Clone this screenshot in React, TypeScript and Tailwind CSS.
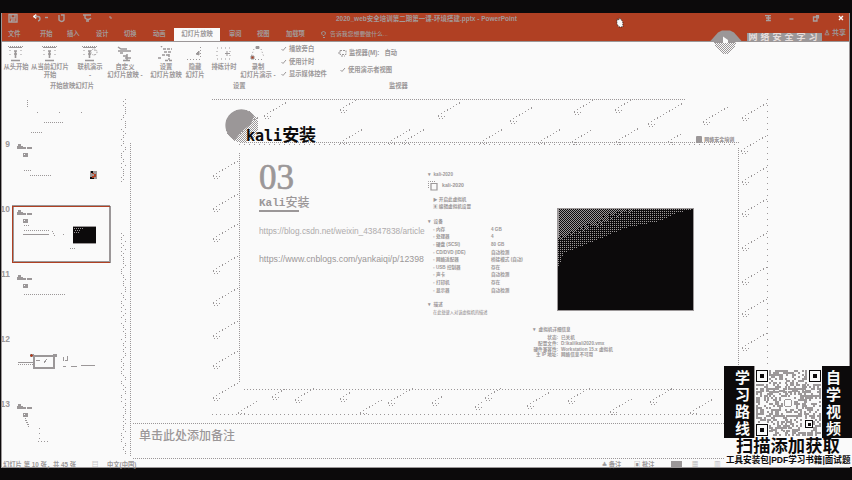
import React from "react";

const GRAY = "#9b9798";
const RED = "#b04023";
const INK = "#0c0a0b";

// A run of points spaced along a segment, drawn as single pixels.
function Dots({ x1, y1, x2, y2, gap = 2 }: { x1: number; y1: number; x2: number; y2: number; gap?: number }) {
  return (
    <line x1={x1} y1={y1} x2={x2} y2={y2} stroke={GRAY} strokeWidth="1" strokeDasharray={`1 ${gap - 1}`} />
  );
}

function noise(n: number) {
  const v = Math.sin(n * 127.1 + 11.7) * 43758.5453;
  return v - Math.floor(v);
}

function QuickIcons() {
  return (
    <svg width="110" height="14" viewBox="0 0 110 14" fill="none" stroke="#a9a0a0" strokeWidth="1.4">
      <path d="M7 1.500h8v7.500h-8z M9 2v3h4v-3 M9.500 9v-2h4" />
      <path d="M31 3.500l3-2v4z" fill="#fafafa" stroke="#fafafa" strokeWidth=".8" />
      <path d="M33 3.500h3q2 0 2 2.500q0 1.500-2 2" />
      <path d="M43 4.500h3" />
      <path d="M57 2v5q3 3 5 0v-5 M59 2h3v3" />
      <path d="M81 2h8 M83 2v3q3 3 6 0 M84 8h3" />
      <path d="M108 3v2h2" strokeWidth="1" />
    </svg>
  );
}

function TitleBar() {
  return (
    <div className="flex h-[15px] shrink-0 items-start">
      <div className="w-[334px] shrink-0"><QuickIcons /></div>
      <div className="h-[11px] w-[183px] shrink-0 whitespace-nowrap text-[6.500px] font-bold leading-[11px] text-[#a39a9a]">
        2020_web安全培训第二期第一课-环境搭建.pptx - PowerPoint
      </div>
      <svg className="ml-[95px]" width="14" height="18" viewBox="0 0 14 18">
        <path d="M3 6l2 1V5l2 1 2 3v5H5L3 11z" fill="#fafafa" stroke={INK} strokeWidth=".8" strokeDasharray="1 1" />
      </svg>
      <svg className="ml-[137px]" width="86" height="12" viewBox="0 0 86 12" fill="none" stroke="#a9a0a0" strokeWidth="1.4">
        <path d="M0 2.500h6 M3.500 3v5 M1 5h5 M1 7.500h5" />
        <path d="M25 6h4" />
        <path d="M52 2.500h2.500v3 M49.500 4h3.500v4h-3.500z" />
        <path d="M75.500 3l4 4 M79.500 3l-4 4" stroke="#fafafa" />
      </svg>
    </div>
  );
}

const tabs: [string, string][] = [
  ["文件", "w-[32px]"],
  ["开始", "w-[27px]"],
  ["插入", "w-[29px]"],
  ["设计", "w-[28px]"],
  ["切换", "w-[29px]"],
  ["动画", "w-[21px]"],
];

function TabBar() {
  return (
    <div className="flex h-[13px] shrink-0 items-stretch pl-[6px] text-[6.300px] font-bold leading-[12px] text-[#a39a9a]">
      {tabs.map(([t, w]) => (
        <div key={t} className={`${w} shrink-0`}>{t}</div>
      ))}
      <div className="h-[14px] w-[46px] shrink-0 bg-[#fafafa] text-center text-[#9b9798]">幻灯片放映</div>
      <div className="ml-[9px] w-[28px] shrink-0">审阅</div>
      <div className="w-[29px] shrink-0">视图</div>
      <div className="w-[35px] shrink-0">加载项</div>
      <svg className="mt-[3px] shrink-0" width="9" height="8" viewBox="0 0 9 8" fill="none" stroke={GRAY}>
        <path d="M.5 1.500q2-2 4 0q0 2-1.500 3h-1q-1.500-1-1.500-3z M2 6.500h2" />
      </svg>
      <div className="whitespace-nowrap text-[5.900px] font-medium">告诉我您想要做什么...</div>
    </div>
  );
}

function RibbonIcon({ kind }: { kind: number }) {
  const board = (
    <>
      <path d="M0 .5h15" strokeDasharray="1 1" />
      <path d="M1 1.500h13" />
      <path d="M6 5h3 M7.500 5v7 M6 8h3" strokeWidth="1.600" />
      <path d="M3 14.500h9" strokeWidth="1.500" />
      <path d="M2 4v8 M13 4v8" strokeDasharray="1 3" />
    </>
  );
  const shapes = [
    board,
    board,
    <>
      {board}
      <circle cx="12" cy="6" r="3" strokeDasharray="1 1" />
    </>,
    <path d="M1 1l3 2h6 M1 5h13 M3 7h3 M6 10h4 M8 12h6 M10 8v6 M6 14.500h7" strokeWidth="1.500" />,
    <path d="M3 0l1 1 M5 3h9 M6 6h8 M4 9h7 M11 8v6 M7 14.500h7 M0 12h3" strokeDasharray="3 1" strokeWidth="1.500" />,
    <>
      <path d="M0 13.500h15 M13.500 1v10" strokeDasharray="1 2" />
      <path d="M9 8l3-3v4z" fill={GRAY} />
    </>,
    <>
      <path d="M1 2h13v11H1z" strokeDasharray="1 3" />
      <path d="M11 5v5 M9 7.500h5" />
    </>,
    <>
      <path d="M4 3l-3 8 M11 3l3 8 M5 13.500h8" strokeDasharray="1 2" />
      <path d="M6 .5h3v2h-3z" fill={GRAY} />
      <path d="M1 10h3v3h-3z" fill={RED} />
    </>,
  ];
  return (
    <svg width="16" height="16" viewBox="0 0 16 16" fill="none" stroke={GRAY} className="shrink-0">
      {shapes[kind]}
    </svg>
  );
}

const commands: [string, string, string][] = [
  ["从头开始", "", "w-[26px]"],
  ["从当前幻灯片", "开始", "w-[42px]"],
  ["联机演示", "-", "w-[38px]"],
  ["自定义", "幻灯片放映 -", "w-[32px]"],
  ["设置", "幻灯片放映", "w-[50px]"],
  ["隐藏", "幻灯片", "w-[8px]"],
  ["排练计时", "", "w-[50px]"],
  ["录制", "幻灯片演示 -", "w-[18px]"],
];

function Check() {
  return (
    <svg width="6" height="6" viewBox="0 0 6 6" fill="none" stroke={GRAY} className="shrink-0">
      <path d="M.5 3l1.500 1.500L5 1" />
    </svg>
  );
}

function Ribbon() {
  return (
    <div className="flex h-[58px] shrink-0 border-t border-[#9b9798] bg-[#fafafa] text-[6.300px] font-bold leading-[8px] text-[#9b9798]">
      <div className="flex w-[276px] shrink-0 flex-col">
        <div className="flex h-[40px] pl-[1px] pt-[4px]">
          {commands.map(([a, b, w], i) => (
            <div key={i} className={`${w} flex shrink-0 flex-col items-center whitespace-nowrap`}>
              <RibbonIcon kind={i} />
              <div className="mt-[1px] flex flex-col items-center">
                <span>{a}</span>
                <span>{b}</span>
              </div>
            </div>
          ))}
        </div>
        <div className="flex">
          <div className="ml-[48px] w-[183px]">开始放映幻灯片</div>
          <div>设置</div>
        </div>
      </div>
      <div className="flex w-[60px] shrink-0 flex-col gap-[4.500px] whitespace-nowrap pt-[3px]">
        {["播放旁白", "使用计时", "显示媒体控件"].map((t) => (
          <div key={t} className="flex items-center gap-[2px] pl-[3px]"><Check />{t}</div>
        ))}
      </div>
      <div className="flex shrink-0 flex-col pt-[7px]">
        <div className="flex items-center gap-[2px]">
          <svg width="9" height="8" viewBox="0 0 9 8" fill="none" stroke={GRAY}>
            <path d="M2 1.500h6v4h-6z M0 4h3 M3 7h4" strokeDasharray="2 1" />
          </svg>
          <span>监视器(M):</span><span className="ml-[3px]">自动</span>
        </div>
        <div className="mt-[9px] flex items-center gap-[2px] pl-[2px]"><Check />使用演示者视图</div>
        <div className="ml-[51px] mt-[8px]">监视器</div>
      </div>
    </div>
  );
}

// Small avatar plus caption that opens each thumbnail.
function ThumbHead({ x, y }: { x: number; y: number }) {
  return (
    <g fill={GRAY} stroke="none">
      <path d={`M${x} ${y + 2}h1v-2h3v2h2v3h-6z`} />
      <rect x={x + 5} y={y + 3} width="4" height="2" />
      <rect x={x + 10} y={y + 3} width="5" height="2" />
      <rect x={x + 6} y={y + 9} width="5" height="4" />
      <rect x={x + 7} y={y + 10} width="1" height="1" fill="#fafafa" />
    </g>
  );
}

function ThumbPane() {
  const speckles: [number, number][] = [];
  for (let y = 0; y < 356; y += 2) {
    if (y > 82 && y < 134) continue;
    speckles.push([121 + 2 * Math.floor(noise(y) * 3), y]);
  }
  return (
    <div className="flex w-[130px] shrink-0">
      <div className="flex w-[9px] shrink-0 flex-col pt-[39px] text-[8.500px] font-bold leading-[12px] text-[#9b9798]">
        {[9, 10, 11, 12, 13].map((n) => (
          <div key={n} className="flex h-[65px] w-[8px] shrink-0 justify-end overflow-hidden">{n}</div>
        ))}
      </div>
      <svg width="121" height="360" viewBox="11 0 121 360" shapeRendering="crispEdges" fill="none" stroke={GRAY} className="shrink-0">
        <Dots x1={27.500} y1={-1} x2={27.500} y2={8} />
        <Dots x1={37} y1={13.500} x2={90} y2={13.500} gap={22} />
        <Dots x1={44} y1={23.500} x2={64} y2={23.500} />
        <Dots x1={31} y1={33.500} x2={43} y2={33.500} />
        <ThumbHead x={17} y={45} />
        <Dots x1={24} y1={71.500} x2={32} y2={71.500} />
        <Dots x1={30} y1={76.500} x2={52} y2={76.500} />
        <path d="M90 72h7v8h-7z" fill={GRAY} stroke="none" />
        <path d="M91 72h2v2h-2z M90 78h4v2h-4z" fill={INK} stroke="none" />
        <path d="M92 74h2v1h-2z M94 75h2v3h-2z M92 77h2v2h-2z" fill={RED} stroke="none" />
        <rect x="12" y="106" width="98" height="1" fill={GRAY} stroke="none" />
        <rect x="13" y="107" width="1" height="57" fill={GRAY} stroke="none" />
        <rect x="12" y="162" width="98" height="1" fill={GRAY} stroke="none" />
        <rect x="109" y="107" width="2" height="57" fill={GRAY} stroke="none" />
        <rect x="12" y="107" width="98" height="1" fill={RED} stroke="none" />
        <rect x="12" y="107" width="1" height="57" fill={RED} stroke="none" />
        <rect x="12" y="163" width="98" height="1" fill={RED} stroke="none" />
        <ThumbHead x={17} y={111} />
        <Dots x1={24} y1={126.500} x2={30} y2={126.500} />
        <Dots x1={24} y1={131.500} x2={50} y2={131.500} />
        <path d="M23 135.500h26" />
        <path d="M52 132.500h1 M53 134.500h1 M54 136.500h1 M63 135.500h1" />
        <rect x="73" y="127" width="23" height="17" fill={INK} stroke="none" />
        <path d="M73 127.500h23 M73 144.500h23" />
        <Dots x1={74} y1={129.500} x2={84} y2={129.500} />
        <Dots x1={75} y1={131.500} x2={81} y2={131.500} />
        <Dots x1={74} y1={133.500} x2={79} y2={133.500} />
        <Dots x1={70} y1={149.500} x2={76} y2={149.500} />
        <ThumbHead x={17} y={176} />
        <Dots x1={24} y1={195.500} x2={65} y2={195.500} />
        <rect x="34" y="257" width="20" height="12" strokeWidth="2" />
        <rect x="30" y="255" width="4" height="3" fill={GRAY} stroke="none" />
        <rect x="53" y="255" width="4" height="3" fill={GRAY} stroke="none" />
        <path d="M30 256.500h3 M31.500 255v3" stroke={RED} />
        <path d="M36 261.500h4 M44 264l3-4 M18 263.500h16" />
        <Dots x1={18} y1={265.500} x2={34} y2={265.500} />
        <path d="M63.500 258v4 M65 261h2 M67.500 257v5 M63 267.500h3 M71 267.500h6 M81 266.500h14" />
        <ThumbHead x={17} y={305} />
        <Dots x1={25} y1={319.500} x2={29} y2={327.500} />
        <Dots x1={39.500} y1={328.500} x2={39.500} y2={340} gap={5} />
        <Dots x1={38} y1={342.500} x2={48} y2={342.500} gap={3} />
        {speckles.map(([x, y], i) => (
          <rect key={i} x={x} y={y} width="1" height="1" fill={GRAY} stroke="none" />
        ))}
        <Dots x1={130.500} y1={44} x2={130.500} y2={358} />
      </svg>
    </div>
  );
}

const devices: [string, string][] = [
  ["内存", "4 GB"],
  ["处理器", "4"],
  ["硬盘 (SCSI)", "80 GB"],
  ["CD/DVD (IDE)", "自动检测"],
  ["网络适配器", "桥接模式 (自动)"],
  ["USB 控制器", "存在"],
  ["声卡", "自动检测"],
  ["打印机", "存在"],
  ["显示器", "自动检测"],
];

function VmColumn() {
  return (
    <div className="flex w-[105px] shrink-0 flex-col whitespace-nowrap pl-[1px] pt-[27px] text-[4.600px] font-bold leading-[7.600px] text-[#9b9798]">
      <div>▾&nbsp; kali-2020</div>
      <div className="mt-[2px] flex items-center gap-[4px]">
        <svg width="10" height="10" viewBox="0 0 10 10" fill="none" stroke={GRAY}>
          <path d="M3 2.500h6v6.500H3z" strokeWidth="1.200" />
          <path d="M.5 7V.5h7" strokeDasharray="1 1" />
        </svg>
        <span className="text-[5.200px]">kali-2020</span>
      </div>
      <div className="mt-[5px] pl-[5px]">▶ 开启此虚拟机</div>
      <div className="pl-[5px]">▣ 编辑虚拟机设置</div>
      <div className="mt-[7.500px]">▾&nbsp; 设备</div>
      {devices.map(([a, b]) => (
        <div key={a} className="flex pl-[5px]">
          <span className="w-[58px] shrink-0">▫ {a}</span>
          <span>{b}</span>
        </div>
      ))}
      <div className="mt-[7px]">▾&nbsp; 描述</div>
      <div className="pl-[5px] text-[4.200px] font-medium">在此处键入对该虚拟机的描述</div>
    </div>
  );
}

const details: [string, string][] = [
  ["状态:", "已关机"],
  ["配置文件:", "D:\\kali\\kali2020.vmx"],
  ["硬件兼容性:", "Workstation 15.x 虚拟机"],
  ["主 IP 地址:", "网络信息不可用"],
];

// Right-hand limit of the highlight in the screen's corner, as [row, column] knots.
const knots: [number, number][] = [[0, 136], [2, 132], [4, 121], [13, 101], [20, 66], [33, 36], [45, 6], [57, 2], [58, 0]];

function reachAt(y: number) {
  for (let i = 1; i < knots.length; i++) {
    const [y0, x0] = knots[i - 1];
    const [y1, x1] = knots[i];
    if (y <= y1) return x0 + ((x1 - x0) * (y - y0)) / (y1 - y0);
  }
  return 0;
}

function Screen() {
  const cells: React.ReactElement[] = [];
  for (let y = 1; y < 58; y++) {
    const reach = reachAt(y);
    for (let x = 2 - (y % 2); x < reach; x += 2) {
      // Even rows thin out with distance from the top-left corner.
      if (y % 2 === 0 && x / 75 + y / 30 > 0.85 + noise(y * 91 + x) * 0.3) continue;
      cells.push(<rect key={`${y}-${x}`} x={x} y={y} width="1" height="1" />);
    }
  }
  return (
    <svg width="137" height="104" viewBox="0 0 137 104" shapeRendering="crispEdges" fill={GRAY}>
      <rect x=".5" y=".5" width="136" height="102" rx="1" fill={INK} stroke={GRAY} />
      <rect x="0" y="0" width="2" height="30" />
      {cells}
    </svg>
  );
}

// Dotted brick texture surrounding the slide's white card.
function SlideTexture() {
  const strokes: [number, number, number][] = [
    [236, 130, 1], [264, 115, 1], [340, 142, 1], [388, 142, 1], [340, 109, .7], [402, 142, 1], [438, 115, 1],
    [480, 142, 1], [510, 120, 1], [538, 142, 1], [572, 141, .8], [574, 111, .8], [616, 141, 1], [615, 109, .8],
    [648, 123, 1.500], [668, 141, .6], [703, 121, 1.100], [742, 117, 1.100], [741, 150, 1.100], [742, 181, 1.100], [742, 213, 1.100],
    [742, 247, 1.100], [742, 281, 1.100], [742, 313, 1.100], [742, 347, 1.100], [742, 380, 1],
    [213, 175, 1.100], [213, 208, 1.100], [213, 238, 1.100], [213, 270, 1.100], [213, 302, 1.100], [213, 335, 1.100],
    [213, 365, 1.100], [213, 397, 1.100], [238, 412, .8], [272, 396, 1], [295, 399, 1], [340, 398, .5],
    [360, 412, .9], [388, 402, 1.200], [432, 402, .5], [475, 406, .3], [485, 397, 1], [527, 405, 1], [568, 400, 1],
    [610, 411, .9], [650, 401, 1], [690, 412, 1],
  ];
  return (
    <svg className="absolute inset-0" width="557" height="316" viewBox="211 99 557 316" shapeRendering="crispEdges" fill="none">
      <Dots x1={212} y1={99.500} x2={686} y2={99.500} />
      <Dots x1={212} y1={414.500} x2={768} y2={414.500} gap={4} />
      <Dots x1={767.500} y1={99} x2={767.500} y2={414} gap={6} />
      {strokes.map(([x, y, s], i) => (
        <Dots key={i} x1={x} y1={y + .5} x2={x + 24 * s} y2={y + .5 - 14 * s} gap={3.500} />
      ))}
      {strokes.map(([x, y], i) => (
        <g key={i}>
          <Dots x1={x} y1={y + 1.500} x2={x + 7} y2={y + 1.500} gap={3} />
          <Dots x1={x + 1} y1={y + 3.500} x2={x + 5} y2={y + 3.500} gap={3} />
        </g>
      ))}
      <rect x="241" y="145" width="497" height="243" fill="#fafafa" />
      <Dots x1={240} y1={142.500} x2={739} y2={142.500} />
      <Dots x1={239} y1={144.500} x2={739} y2={144.500} gap={5} />
      <Dots x1={239.500} y1={153} x2={239.500} y2={383} />
      <Dots x1={738.500} y1={148} x2={738.500} y2={388} />
      <Dots x1={244} y1={389.500} x2={739} y2={389.500} gap={3} />
    </svg>
  );
}

function Slide() {
  return (
    <div className="relative ml-[79px] flex h-[316px] w-[557px] shrink-0 flex-col">
      <SlideTexture />
      <div className="relative flex h-[45px] shrink-0 items-start pl-[14px]">
        <svg width="34" height="36" viewBox="0 0 34 36" className="mt-[10px] shrink-0">
          <defs>
            <pattern id="grain" width="2" height="2" patternUnits="userSpaceOnUse">
              <path d="M0 0h1v1H0z M1 1h1v1H1z" fill={GRAY} />
            </pattern>
          </defs>
          <circle cx="17" cy="17" r="16.500" fill="url(#grain)" shapeRendering="crispEdges" />
          <path d="M10 31A16 16 0 1 1 29 6.500L26 15 16 23z" fill={GRAY} />
        </svg>
        <div className="-ml-[13px] mt-[27px] flex items-center whitespace-nowrap leading-[20px] text-[#0c0a0b]">
          <span className="font-['DejaVu_Sans_Mono',monospace] text-[15px] font-bold">kali</span>
          <span className="text-[17px] font-bold">安装</span>
        </div>
        <div className="ml-[380px] mt-[37px] flex shrink-0 items-center gap-[2px]">
          <div className="h-[7px] w-[6px] rounded-[1px] bg-[#9b9798]" />
          <span className="whitespace-nowrap text-[5px] font-black leading-[7px] text-[#9b9798]">网络安全培训</span>
        </div>
      </div>
      <div className="relative flex min-h-0 flex-1 pl-[48px]">
        <div className="flex w-[168px] shrink-0 flex-col whitespace-nowrap text-[#9b9798]">
          <div className="mt-[14px] h-[39px] font-['Liberation_Serif',serif] text-[35px] leading-[40px] [-webkit-text-stroke:0.700px_#9b9798]">03</div>
          <div className="flex h-[13px] items-center leading-[13px]">
            <span className="font-['Liberation_Mono',monospace] text-[11px] font-bold">Kali</span>
            <span className="text-[12px] font-medium">安装</span>
          </div>
          <div className="h-[2px] w-[40px] bg-[#9b9798]" />
          <div className="mt-[13px] h-[12px] text-[8.300px] leading-[12px] opacity-80">https://blog.csdn.net/weixin_43847838/article</div>
          <div className="mt-[16px] h-[12px] text-[8.750px] leading-[12px]">https://www.cnblogs.com/yankaiqi/p/12398</div>
        </div>
        <VmColumn />
        <div className="flex flex-col pl-[25px]">
          <div className="pt-[64px]"><Screen /></div>
          <div className="-ml-[24px] mt-[15px] flex flex-col whitespace-nowrap text-[4.600px] font-bold leading-[5.800px] text-[#9b9798]">
            <div className="mb-[1.500px] leading-[6.500px]">▾&nbsp; 虚拟机详细信息</div>
            {details.map(([a, b]) => (
              <div key={a} className="flex gap-[3px]">
                <span className="w-[25px] text-right">{a}</span>
                <span>{b}</span>
              </div>
            ))}
          </div>
        </div>
      </div>
    </div>
  );
}

function DottedRule() {
  return (
    <svg width="718" height="1" viewBox="0 0 718 1" shapeRendering="crispEdges" className="block shrink-0">
      <Dots x1={1} y1={.5} x2={718} y2={.5} />
    </svg>
  );
}

function StatusBar() {
  return (
    <div className="flex h-[9px] shrink-0 items-center whitespace-nowrap border-b border-[#9b9798] pl-[1px] pt-[2px] text-[6.300px] font-bold leading-[7px] text-[#9b9798]">
      <span className="w-[89px]">幻灯片 第 10 张，共 45 张</span>
      <span className="w-[15px]">▤</span>
      <span className="w-[495px]">中文(中国)</span>
      <span className="w-[32px]">≜ 备注</span>
      <span className="w-[37px]">▣ 批注</span>
      <span className="h-[6px] w-[11px] bg-[#9b9798]" />
      <span className="ml-[10px]">▦</span>
      <span className="ml-[16px]">▥</span>
    </div>
  );
}

function QrCode() {
  const cells: React.ReactElement[] = [];
  for (let r = 0; r < 34; r++) {
    for (let c = 0; c < 34; c++) {
      const corner = (r < 7 && (c < 7 || c > 26)) || (r > 26 && c < 7);
      const align = r > 24 && r < 31 && c > 23 && c < 30;
      const center = r > 13 && r < 20 && c > 13 && c < 20;
      if (corner || align || center) continue;
      if (noise(r * 57 + c * 3.300) > 0.5) {
        cells.push(<rect key={`${r}-${c}`} x={c * 1.900} y={r * 1.950} width="2" height="2" />);
      }
    }
  }
  const finder = (x: number, y: number, s: number) => (
    <g>
      <rect x={x + .5} y={y + .5} width={s - 1} height={s - 1} fill="#fafafa" stroke={INK} />
      <rect x={Math.round(x + s / 3)} y={Math.round(y + s / 3)} width={Math.round(s / 3)} height={Math.round(s / 3)} fill={INK} />
    </g>
  );
  return (
    <svg width="66" height="68" viewBox="0 0 66 68" fill={GRAY} shapeRendering="crispEdges">
      {cells}
      {finder(0, 0, 12)}
      {finder(53, 0, 12)}
      {finder(0, 54, 12)}
      {finder(49, 50, 8)}
      <circle cx="32" cy="33" r="4" fill="none" stroke={GRAY} />
    </svg>
  );
}

function Promo() {
  return (
    <div className="absolute left-[724px] top-[366px] flex h-[101px] w-[128px] flex-col bg-[#fafafa]">
      <div className="flex h-[72px] shrink-0 bg-[#0c0a0b] text-[15px] font-bold leading-[16.900px] text-[#fafafa]">
        <div className="flex w-[30px] shrink-0 flex-col items-center pl-[7px] pt-[4px]">
          {"学习路线".split("").map((c) => <span key={c}>{c}</span>)}
        </div>
        <div className="w-[68px] shrink-0 border-l border-[#9b9798] bg-[#fafafa] pl-[1px] pt-[4px]"><QrCode /></div>
        <div className="flex flex-1 flex-col items-center pr-[7px] pt-[4px]">
          {"自学视频".split("").map((c) => <span key={c}>{c}</span>)}
        </div>
      </div>
      <div className="whitespace-nowrap pl-[12px] text-[17.300px] font-bold leading-[17px] text-[#0c0a0b]">扫描添加获取</div>
      <div className="whitespace-nowrap pl-[2px] text-[8.550px] font-bold leading-[10px] text-[#0c0a0b]">工具安装包|PDF学习书籍|面试题</div>
    </div>
  );
}

function Watermark() {
  return (
    <div className="absolute left-[704px] top-[28px] flex h-[28px] items-start">
      <svg width="43" height="28" viewBox="0 0 43 28">
        <path d="M6 13.500l8-9 4-2h8l4 2 8 9z" fill={GRAY} />
        <path d="M10 13h22l-1 6-6 7h-6l-7-6z" fill="url(#grain)" shapeRendering="crispEdges" />
        <path d="M10 13h22l-1 2h-20z" fill={GRAY} />
        <path d="M19 8.500l5 3.500v3h-5z" fill="#fafafa" />
      </svg>
      <div className="mt-[5px] h-[9px] w-[75px] overflow-hidden whitespace-nowrap bg-[#9b9798] text-center text-[9px] font-bold leading-[9px] tracking-[3px] text-[#e6dedc]">网络安全学习</div>
      <div className="ml-[2px] whitespace-nowrap text-[7px] font-bold leading-[10px] text-[#9b9798]">♙ 共享</div>
    </div>
  );
}

export default function App() {
  return (
    <div className="relative flex h-[480px] w-[852px] flex-col overflow-hidden bg-[#0c0a0b] pt-[13px] font-['Liberation_Sans','Noto_Sans_CJK_SC',sans-serif]">
      <div className="ml-[1px] flex h-[455px] w-[849px] shrink-0 flex-col border-x border-[#9b9798] bg-[#fafafa]">
        <div className="flex h-[28px] shrink-0 flex-col bg-[#b04023]">
          <TitleBar />
          <TabBar />
        </div>
        <Ribbon />
        <div className="flex h-[360px] shrink-0">
          <ThumbPane />
          <div className="flex min-w-0 flex-1 flex-col overflow-hidden">
            <Slide />
            <div className="mt-[8px]"><DottedRule /></div>
            <div className="h-[34px] shrink-0 pl-[7px] text-[12px] font-medium leading-[24px] text-[#9b9798]">单击此处添加备注</div>
            <DottedRule />
          </div>
        </div>
        <StatusBar />
      </div>
      <Watermark />
      <Promo />
    </div>
  );
}
